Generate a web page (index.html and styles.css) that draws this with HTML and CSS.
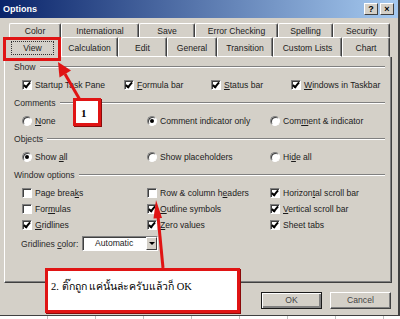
FILE: index.html
```html
<!DOCTYPE html>
<html>
<head>
  <title>Options</title>
  <link rel="stylesheet" href="styles.css">
</head>
<body>
<div class="win">
  <div class="titlebar">
    <span class="title">Options</span>
    <div class="tbtns"><span class="tb">?</span><span class="tb">&#215;</span></div>
  </div>

  <!-- tab rows -->
  <div class="tabs">
    <div class="tabrow back">
      <div class="tab w-color">Color</div>
      <div class="tab w-intl">International</div>
      <div class="tab w-save">Save</div>
      <div class="tab w-err">Error Checking</div>
      <div class="tab w-spell">Spelling</div>
      <div class="tab w-sec">Security</div>
    </div>
    <div class="tabrow front">
      <div class="tab sel w-view"><span class="focus">View</span></div>
      <div class="tab w-calc">Calculation</div>
      <div class="tab w-edit">Edit</div>
      <div class="tab w-gen">General</div>
      <div class="tab w-trans">Transition</div>
      <div class="tab w-lists">Custom Lists</div>
      <div class="tab w-chart">Chart</div>
    </div>
  </div>

  <div class="panel">
    <div class="group">
      <div class="ghead"><span>Show</span><i class="rule"></i></div>
      <div class="opts four">
        <label class="opt"><span class="cb on"></span>Startup Task Pane</label>
        <label class="opt"><span class="cb on"></span><span><u>F</u>ormula bar</span></label>
        <label class="opt"><span class="cb on"></span><span><u>S</u>tatus bar</span></label>
        <label class="opt"><span class="cb on"></span><span><u>W</u>indows in Taskbar</span></label>
      </div>
    </div>

    <div class="group">
      <div class="ghead"><span>Comments</span><i class="rule"></i></div>
      <div class="opts three">
        <label class="opt"><span class="rd"></span><span><u>N</u>one</span></label>
        <label class="opt"><span class="rd on"></span>Comment indicator only</label>
        <label class="opt"><span class="rd"></span><span>Com<u>m</u>ent &amp; indicator</span></label>
      </div>
    </div>

    <div class="group">
      <div class="ghead"><span>Objects</span><i class="rule"></i></div>
      <div class="opts three">
        <label class="opt"><span class="rd on"></span><span>Show <u>a</u>ll</span></label>
        <label class="opt"><span class="rd"></span>Show placeholders</label>
        <label class="opt"><span class="rd"></span><span>Hi<u>d</u>e all</span></label>
      </div>
    </div>

    <div class="group">
      <div class="ghead"><span>Window options</span><i class="rule"></i></div>
      <div class="opts three">
        <label class="opt"><span class="cb"></span><span>Page brea<u>k</u>s</span></label>
        <label class="opt"><span class="cb"></span><span>Row &amp; column h<u>e</u>aders</span></label>
        <label class="opt"><span class="cb on"></span><span>Horizon<u>t</u>al scroll bar</span></label>
        <label class="opt"><span class="cb"></span><span>For<u>m</u>ulas</span></label>
        <label class="opt"><span class="cb on"></span><span><u>O</u>utline symbols</span></label>
        <label class="opt"><span class="cb on"></span><span><u>V</u>ertical scroll bar</span></label>
        <label class="opt"><span class="cb on"></span><span><u>G</u>ridlines</span></label>
        <label class="opt"><span class="cb on"></span><span><u>Z</u>ero values</span></label>
        <label class="opt"><span class="cb on"></span>Sheet tabs</label>
      </div>
      <div class="gcolor">
        <span class="gclabel">Gridlines <u>c</u>olor:</span>
        <div class="select"><span class="selval">Automatic</span><span class="drop"><i class="tri"></i></span></div>
      </div>
    </div>
  </div>

  <div class="btns">
    <div class="btn def">OK</div>
    <div class="btn">Cancel</div>
  </div>

  <!-- red annotations drawn over the dialog -->
  <svg class="marks" width="400" height="319" viewBox="0 0 400 319">
    <rect x="4.5" y="38.5" width="55" height="21" fill="none" stroke="#e01414" stroke-width="3"/>
    <line x1="80" y1="100" x2="65" y2="74" stroke="#e01414" stroke-width="3"/>
    <polygon points="58,62 71,70.5 59.5,77.5" fill="#e01414"/>
    <line x1="163" y1="268" x2="158" y2="216" stroke="#e01414" stroke-width="3"/>
    <polygon points="156,200 162,218 153.5,218.5" fill="#e01414"/>
  </svg>
  <div class="note n1">1</div>
  <div class="note n2">2. ติ๊กถูก แค่นั้นล่ะครับแล้วก็ OK</div>
</div>
<div class="sheet"></div>
</body>
</html>
```

FILE: styles.css
```css
body {
  margin: 0;
  background: #f4f4f4;
  font-family: "Liberation Sans", Arial, sans-serif;
  font-size: 8.6px;
  color: #1c1c1c;
}

.win {
  position: relative;
  width: 400px;
  height: 316px;
  box-sizing: border-box;
  background: #d4d0c8;
  border-right: 2px solid #404040;
  border-bottom: 1px solid #404040;
}

.sheet {
  height: 3px;
  background: repeating-linear-gradient(to right, #fff 0, #fff 47px, #c0c0c0 47px, #c0c0c0 48px);
}

/* title bar */
.titlebar {
  height: 18px;
  display: flex;
  align-items: center;
  justify-content: space-between;
  padding: 0 4px 0 3px;
  background: linear-gradient(to right, #0a246a, #a6caf0);
}
.title {
  color: #fff;
  font-weight: bold;
  font-size: 9px;
}
.tbtns {
  display: flex;
  gap: 2px;
}
.tb {
  width: 12px;
  height: 10px;
  box-sizing: content-box;
  background: #d4d0c8;
  border: 1px solid;
  border-color: #fff #404040 #404040 #fff;
  font: bold 9px/10px "Liberation Sans", Arial, sans-serif;
  text-align: center;
  color: #000;
}

/* tabs */
.tabs {
  padding-top: 5px;
}
.tabrow {
  display: flex;
}
.tab {
  box-sizing: border-box;
  text-align: center;
  white-space: nowrap;
  border: 1px solid;
  border-color: #fff #404040 transparent #fff;
  border-radius: 2px 2px 0 0;
  box-shadow: inset -1px 0 #808080;
}
.back {
  margin-left: 9px;
  height: 14px;
}
.back .tab {
  height: 14px;
  line-height: 15px;
  border-bottom: 0;
  overflow: hidden;
}
.front {
  margin-left: 4px;
  height: 20px;
}
.front .tab {
  height: 20px;
  line-height: 18px;
  padding-top: 1px;
  border-bottom: 1px solid #fff;
}
.front .tab.sel {
  border-bottom-color: #d4d0c8;
}
.focus {
  display: inline-block;
  width: 41px;
  line-height: 12px;
  border: 1px dotted #333;
}

.w-color { width: 52px; }
.w-intl { width: 78px; }
.w-save { width: 56px; }
.w-err { width: 83px; }
.w-spell { width: 55px; }
.w-sec { width: 57px; }
.w-view { width: 57px; }
.w-calc { width: 57px; }
.w-edit { width: 49px; }
.w-gen { width: 50px; }
.w-trans { width: 56px; }
.w-lists { width: 69px; }
.w-chart { width: 48px; }

/* page */
.panel {
  box-sizing: border-box;
  margin-left: 4px;
  width: 388px;
  height: 226px;
  padding-top: 4px;
  border-left: 1px solid #fff;
  border-right: 1px solid #404040;
  border-bottom: 1px solid #404040;
  box-shadow: inset -1px -1px #808080;
}
.group + .group {
  margin-top: 4px;
}
.ghead {
  display: flex;
  align-items: center;
  gap: 4px;
  height: 12px;
  padding-left: 9px;
  color: #2a2a2a;
}
.rule {
  flex: 1;
  margin-right: 6px;
  border-top: 1px solid #808080;
  border-bottom: 1px solid #fff;
}
.opts {
  display: grid;
  grid-auto-rows: 16px;
  margin-top: 4px;
  padding-left: 17px;
}
.four {
  grid-template-columns: 102px 87px 80px 1fr;
}
.three {
  grid-template-columns: 125px 123px 1fr;
}
.opt {
  display: flex;
  align-items: center;
  gap: 3px;
  white-space: nowrap;
}
u {
  text-decoration-thickness: 1px;
  text-underline-offset: 1px;
}

.cb,
.rd {
  flex: none;
  position: relative;
  width: 10px;
  height: 10px;
  box-sizing: border-box;
  background: #fff;
  border: 1px solid;
  border-color: #808080 #fff #fff #808080;
  box-shadow: inset 1px 1px #404040;
}
.cb.on::after {
  content: "";
  position: absolute;
  left: 2px;
  top: 0px;
  width: 2px;
  height: 5px;
  border: solid #000;
  border-width: 0 2px 2px 0;
  transform: rotate(40deg);
}
.rd {
  border-radius: 50%;
}
.rd.on::after {
  content: "";
  position: absolute;
  left: 2px;
  top: 2px;
  width: 4px;
  height: 4px;
  border-radius: 50%;
  background: #000;
}

.gcolor {
  display: flex;
  align-items: center;
  margin-top: 3px;
  padding-left: 16px;
}
.gclabel {
  width: 61px;
  color: #2a2a2a;
}
.select {
  display: flex;
  width: 76px;
  height: 15px;
  box-sizing: border-box;
  background: #fff;
  border: 1px solid;
  border-color: #808080 #fff #fff #808080;
  box-shadow: inset 1px 1px #404040;
}
.selval {
  padding-left: 12px;
  line-height: 13px;
}
.drop {
  display: flex;
  align-items: center;
  justify-content: center;
  width: 11px;
  margin-left: auto;
  box-sizing: border-box;
  background: #d4d0c8;
  border: 1px solid;
  border-color: #fff #404040 #404040 #fff;
}
.tri {
  border-left: 3px solid transparent;
  border-right: 3px solid transparent;
  border-top: 3px solid #000;
}

/* buttons */
.btns {
  display: flex;
  justify-content: flex-end;
  gap: 8px;
  margin-top: 9px;
  padding-right: 7px;
}
.btn {
  width: 61px;
  height: 17px;
  box-sizing: border-box;
  text-align: center;
  line-height: 15px;
  color: #444;
  border: 1px solid;
  border-color: #fff #404040 #404040 #fff;
  box-shadow: inset -1px -1px #808080;
}
.btn.def {
  border-color: #1a1a1a;
  box-shadow: inset 1px 1px #fff, inset -2px -2px #808080;
}

/* annotations */
.marks {
  position: absolute;
  left: 0;
  top: 0;
  pointer-events: none;
}
.note {
  position: absolute;
  box-sizing: border-box;
  background: #fff;
  border: 3px solid #e01414;
  box-shadow: 1px 1px 0 #8a0a0a;
  color: #000;
  font-family: "Liberation Serif", "Times New Roman", serif;
}
.n1 {
  left: 73px;
  top: 98px;
  width: 28px;
  height: 28px;
  padding: 6px 0 0 5px;
  font-size: 11px;
  font-weight: bold;
}
.n2 {
  left: 45px;
  top: 268px;
  width: 195px;
  height: 45px;
  padding: 9px 0 0 3px;
  font-size: 10.5px;
  line-height: 14px;
}
```
